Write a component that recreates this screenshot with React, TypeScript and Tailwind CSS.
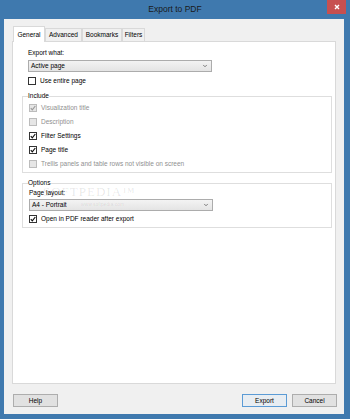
import { ChevronDown } from "lucide-react";

const font = { fontFamily: "'Liberation Sans', Arial, sans-serif" };

function Check({ checked, disabled }: { checked?: boolean; disabled?: boolean }) {
  return (
    <div
      className={
        "w-[8px] h-[8px] border flex items-center justify-center shrink-0 " +
        (disabled ? "border-[#bcbcbc] bg-[#e6e6e6]" : "border-[#333333] bg-white")
      }
    >
      {checked && (
        <svg width="6" height="6" viewBox="0 0 6 6">
          <path
            d="M0.8 3.2 L2.3 4.8 L5.3 1"
            fill="none"
            stroke={disabled ? "#9a9a9a" : "#111111"}
            strokeWidth="1.2"
          />
        </svg>
      )}
    </div>
  );
}

function CheckRow({
  label,
  checked,
  disabled,
  className = "h-[14px]",
}: {
  label: string;
  checked?: boolean;
  disabled?: boolean;
  className?: string;
}) {
  return (
    <div className={"flex items-center gap-[4px] pl-[6px] " + className}>
      <Check checked={checked} disabled={disabled} />
      <span className={"text-[6.5px] " + (disabled ? "text-[#8f8f8f]" : "text-black")}>{label}</span>
    </div>
  );
}

function Select({ value }: { value: string }) {
  return (
    <div className="ml-[6px] w-[184px] h-[12px] border border-[#acacac] bg-gradient-to-b from-[#f3f3f3] to-[#e4e4e4] flex items-center justify-between pl-[2px] pr-[3px]">
      <span className="text-[6.5px] text-black">{value}</span>
      <ChevronDown className="w-[6px] h-[6px] text-[#555555]" strokeWidth={3} />
    </div>
  );
}

function GroupBox({ title, children }: { title: string; children: React.ReactNode }) {
  return (
    <div className="relative border border-[#dedede] mt-[10px]">
      <span className="absolute left-[5px] -top-[6px] text-[6.5px] leading-[10px] text-black bg-white">
        {title}
      </span>
      {children}
    </div>
  );
}

function Btn({ label, primary }: { label: string; primary?: boolean }) {
  return (
    <div
      className={
        "w-[45px] h-[13px] border flex items-center justify-center text-[6.5px] text-black " +
        (primary ? "border-[#5b9bd5] bg-[#e8edf2]" : "border-[#adadad] bg-[#e1e1e1]")
      }
    >
      {label}
    </div>
  );
}

export default function App() {
  const tabs = [
    { name: "Advanced", w: "w-[37px]" },
    { name: "Bookmarks", w: "w-[40px]" },
    { name: "Filters", w: "w-[23px]" },
  ];
  return (
    <div className="w-[350px] h-[419px] bg-[#3f79ae] flex flex-col" style={font}>
      {/* Title bar */}
      <div className="relative h-[19px] flex items-center justify-center">
        <span className="text-[8.5px] text-[#1a1a1a]">Export to PDF</span>
        <div className="absolute right-[4px] top-0 w-[19px] h-[14px] bg-[#c75050] flex items-center justify-center">
          <svg width="6" height="6" viewBox="0 0 6 6">
            <path d="M1 1 L5 5 M5 1 L1 5" stroke="white" strokeWidth="1.4" />
          </svg>
        </div>
      </div>

      {/* Client area */}
      <div className="ml-[4px] mr-[6px] mb-[5px] flex-1 bg-[#f0f0f0] flex flex-col px-[8px]">
        {/* Tabs */}
        <div className="mt-[7px] h-[15px] flex items-end pl-[1px]">
          <div className="relative z-10 -mb-[1px] w-[32px] h-[16px] bg-white border border-b-0 border-[#d9d9d9] flex items-center justify-center text-[6.5px] text-black">
            General
          </div>
          {tabs.map((t) => (
            <div
              key={t.name}
              className={
                t.w +
                " h-[13px] bg-[#f0f0f0] border border-b-0 border-[#d9d9d9] flex items-center justify-center text-[6.5px] text-black"
              }
            >
              {t.name}
            </div>
          ))}
        </div>

        {/* Panel */}
        <div className="relative h-[343px] bg-white border border-[#d9d9d9] pl-[9px] pr-[3px] flex flex-col">
          <div className="mt-[6px] h-[10px] leading-[10px] pl-[6px] text-[6.5px] text-black">Export what:</div>
          <div className="mt-[2px]">
            <Select value="Active page" />
          </div>
          <CheckRow label="Use entire page" className="mt-[4px] h-[10px]" />

          <GroupBox title="Include">
            <div className="pt-[4px] pb-[1px]">
              <CheckRow label="Visualization title" checked disabled />
              <CheckRow label="Description" disabled />
              <CheckRow label="Filter Settings" checked />
              <CheckRow label="Page title" checked />
              <CheckRow label="Trellis panels and table rows not visible on screen" disabled />
            </div>
          </GroupBox>

          <GroupBox title="Options">
            <div className="pt-[4px] pb-[2px]">
              <div className="h-[10px] leading-[10px] pl-[6px] text-[6.5px] text-black">Page layout:</div>
              <div className="mt-[1px]">
                <Select value="A4 - Portrait" />
              </div>
              <CheckRow label="Open in PDF reader after export" checked className="mt-[2px] h-[12px]" />
            </div>
          </GroupBox>

          {/* watermark */}
          <span
            className="absolute left-[30px] top-[140px] text-[13px] tracking-[1px] text-black/10 pointer-events-none"
            style={{ fontFamily: "'Liberation Serif', serif" }}
          >
            SOFTPEDIA™
          </span>
          <span className="absolute left-[68px] top-[159px] text-[5px] text-black/10 pointer-events-none">
            www.softpedia.com
          </span>
        </div>

        {/* Buttons */}
        <div className="mt-[10px] flex items-center pl-[1px] -mr-[1px]">
          <Btn label="Help" />
          <div className="flex-1" />
          <Btn label="Export" primary />
          <div className="w-[5px]" />
          <Btn label="Cancel" />
        </div>
      </div>
    </div>
  );
}
